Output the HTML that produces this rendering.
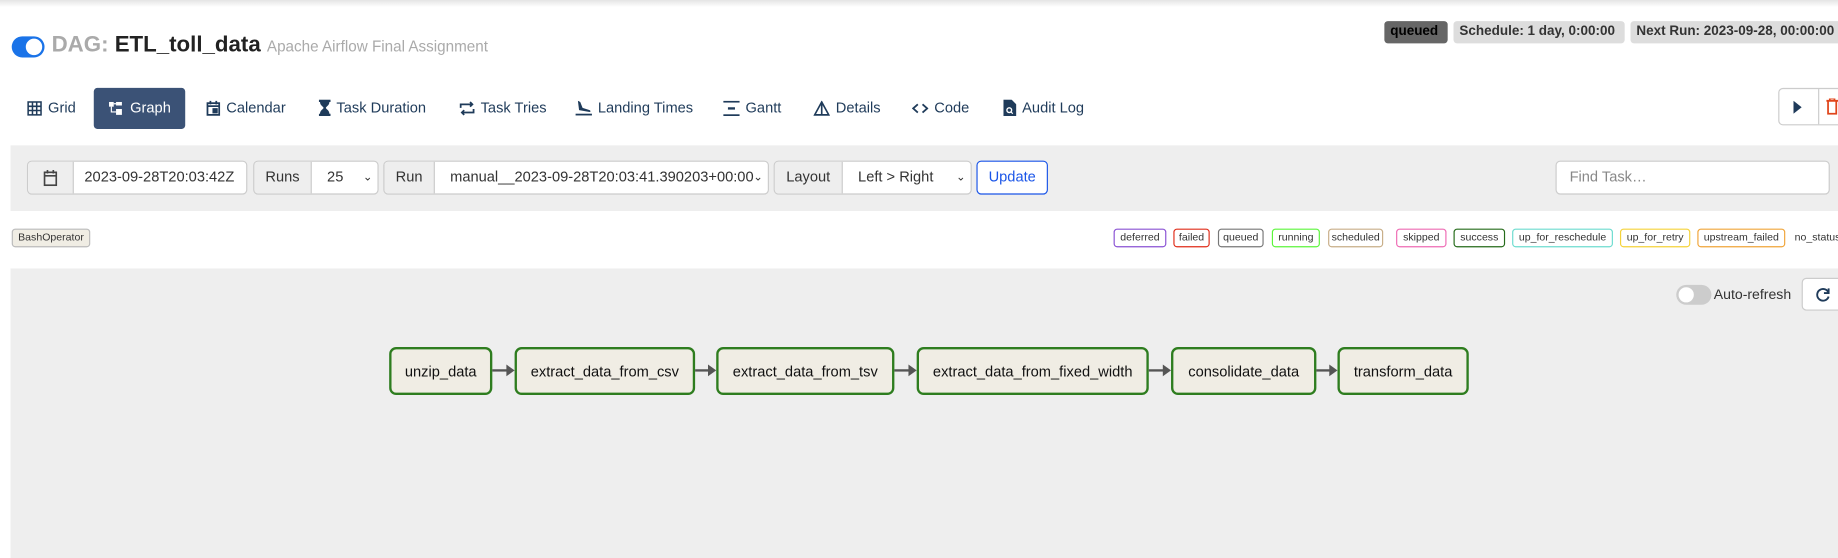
<!DOCTYPE html>
<html><head><meta charset="utf-8"><style>
html,body{margin:0;padding:0;width:1838px;height:557px;overflow:hidden;background:#fff;font-family:"Liberation Sans",Arial,sans-serif;}
#w{position:absolute;left:0;top:0;width:1568px;height:476px;transform:scale(1.1722);transform-origin:0 0;}
.a{position:absolute;}
.shadow{left:0;top:0;width:1568px;height:6px;background:linear-gradient(#e4e4e4,#fff);}
.badge{position:absolute;top:18px;height:19px;line-height:19px;font-size:11.5px;font-weight:bold;padding:0 5px;border-radius:3px;background:#ddd;color:#333;white-space:nowrap;overflow:hidden}
.nav{position:absolute;top:75px;height:35px;line-height:35px;font-size:12.5px;color:#1f3b5a;white-space:nowrap;}
.nav svg{vertical-align:-3px;margin-right:5px}
.panel{background:#eee;}
.grp{position:absolute;top:137px;height:29px;border:1px solid #ccc;border-radius:4px;background:#fff;font-size:12.5px;color:#333;line-height:27px;box-sizing:border-box;overflow:hidden;white-space:nowrap}
.lbl{position:absolute;top:0;bottom:0;left:0;background:#eee;border-right:1px solid #ccc;text-align:center;}
.leg{position:absolute;top:195px;height:16px;line-height:13px;font-size:9px;border:1.5px solid;border-radius:3px;box-sizing:border-box;padding:0;text-align:center;color:#333;background:#fff;white-space:nowrap;overflow:hidden}
.node{position:absolute;top:296px;height:41px;line-height:38px;border:2px solid #2e7d1f;border-radius:6px;background:#f0ede4;box-sizing:border-box;text-align:center;font-size:12.5px;color:#111;}
.arr{position:absolute;top:315px;height:2px;background:#555;}
.arr:after{content:"";position:absolute;right:-2px;top:-4px;border-left:7px solid #555;border-top:5px solid transparent;border-bottom:5px solid transparent;}
</style></head><body><div id="w">
<div class="a shadow"></div>
<div class="a" style="left:10px;top:31px;width:28px;height:18px;border-radius:9px;background:#1a73e8"><div style="position:absolute;right:2px;top:2px;width:14px;height:14px;border-radius:7px;background:#fff"></div></div>
<div class="a" style="left:44px;top:28px;font-size:19px;font-weight:bold;white-space:nowrap"><span style="color:#aaa">DAG:</span> <span style="color:#222">ETL_toll_data</span> <span style="font-size:13px;font-weight:normal;color:#aaa">Apache Airflow Final Assignment</span></div>
<div class="badge" style="left:1181px;width:44px;background:#666;color:#000">queued</div>
<div class="badge" style="left:1240px;width:136px">Schedule: 1 day, 0:00:00</div>
<div class="badge" style="left:1391px;width:172px;border-radius:3px 0 0 3px">Next Run: 2023-09-28, 00:00:00</div>

<div class="a" style="left:80px;top:75px;width:78px;height:35px;background:#3b5276;border-radius:3px"></div>
<div class="nav" style="left:23px"><svg width="13" height="13" viewBox="0 0 13 13" fill="none" stroke="#1f3b5a" stroke-width="1.3"><rect x="1" y="1" width="11" height="11"/><path d="M1 4.7H12M1 8.3H12M4.7 1V12M8.3 1V12"/></svg>Grid</div>
<div class="nav" style="left:93px;color:#fff"><svg width="13" height="13" viewBox="0 0 13 13" fill="#fff"><rect x="0" y="1" width="4" height="4"/><rect x="6" y="1" width="5" height="3"/><rect x="6" y="7" width="5" height="5"/><path d="M4 2.5H6M2 5V9.5H6" stroke="#fff" fill="none"/></svg>Graph</div>
<div class="nav" style="left:176px"><svg width="12" height="13" viewBox="0 0 12 13" fill="none" stroke="#1f3b5a" stroke-width="1.5"><rect x="1" y="2" width="10" height="10"/><path d="M1 4.5H11M3.5 0V3M8.5 0V3"/><rect x="6" y="7" width="3" height="3" fill="#1f3b5a"/></svg>Calendar</div>
<div class="nav" style="left:272px"><svg width="10" height="14" viewBox="0 0 10 14" fill="#1f3b5a"><path d="M0 0H10V2H9C9 5 6 6 6 7C6 8 9 9 9 12H10V14H0V12H1C1 9 4 8 4 7C4 6 1 5 1 2H0Z"/></svg>Task Duration</div>
<div class="nav" style="left:392px"><svg width="13" height="13" viewBox="0 0 13 13" fill="none" stroke="#1f3b5a" stroke-width="1.5"><path d="M1 6V3H11M9 1L11 3L9 5M12 7V10H2M4 8L2 10L4 12"/></svg>Task Tries</div>
<div class="nav" style="left:491px"><svg width="14" height="13" viewBox="0 0 14 13" fill="#1f3b5a"><path d="M2 0L4 1L6 6L12 8C13 8.5 13 9.5 12 9.5L3 8Z"/><rect x="0" y="11" width="14" height="1.5"/></svg>Landing Times</div>
<div class="nav" style="left:617px"><svg width="14" height="13" viewBox="0 0 14 13" fill="#1f3b5a"><rect x="0" y="0" width="14" height="1.5"/><rect x="4" y="5.5" width="6" height="2"/><rect x="0" y="11.5" width="14" height="1.5"/></svg>Gantt</div>
<div class="nav" style="left:694px"><svg width="14" height="13" viewBox="0 0 14 13" fill="none" stroke="#1f3b5a" stroke-width="1.4"><path d="M7 1L13 12H1Z M7 1V12"/></svg>Details</div>
<div class="nav" style="left:778px"><svg width="14" height="13" viewBox="0 0 14 13" fill="none" stroke="#1f3b5a" stroke-width="1.5"><path d="M5 3L1 6.5L5 10M9 3L13 6.5L9 10"/></svg>Code</div>
<div class="nav" style="left:856px"><svg width="11" height="14" viewBox="0 0 11 14" fill="#1f3b5a"><path d="M0 0H7L11 4V14H0Z"/><circle cx="5" cy="9" r="2" fill="none" stroke="#fff" stroke-width="1.2"/><path d="M6.5 10.5L8 12" stroke="#fff"/></svg>Audit Log</div>
<div class="a" style="left:1517px;top:75px;width:60px;height:32px;border:1px solid #ccc;border-radius:4px;box-sizing:border-box;background:#fff"><div style="position:absolute;left:33px;top:0;bottom:0;border-left:1px solid #ccc"></div><svg class="a" style="left:12px;top:10px" width="8" height="11"><path d="M0 0L7 5.5L0 11Z" fill="#1f3b5a"/></svg><svg class="a" style="left:40px;top:8px" width="10" height="14" fill="none" stroke="#e0451b" stroke-width="1.5"><path d="M0 2H10M3 2V0H7V2M1.5 2V13H8.5V2"/></svg></div>

<div class="a panel" style="left:9px;top:124px;width:1559px;height:56px"></div>
<div class="grp" style="left:23px;width:188px"><div class="lbl" style="width:38px"><svg style="margin-top:7px" width="12" height="14" fill="none" stroke="#444" stroke-width="1.4"><rect x="1" y="2" width="10" height="11"/><path d="M1 5H11M3.5 0V3M8.5 0V3"/></svg></div><span style="position:absolute;left:48px">2023-09-28T20:03:42Z</span></div>
<div class="grp" style="left:216px;width:107px"><div class="lbl" style="width:48px">Runs</div><span style="position:absolute;left:62px">25</span><span style="position:absolute;right:4px;font-size:10px">&#8964;</span></div>
<div class="grp" style="left:327px;width:329px"><div class="lbl" style="width:42px">Run</div><span style="position:absolute;left:56px">manual__2023-09-28T20:03:41.390203+00:00</span><span style="position:absolute;right:4px;font-size:10px">&#8964;</span></div>
<div class="grp" style="left:660px;width:169px"><div class="lbl" style="width:57px">Layout</div><span style="position:absolute;left:71px">Left &gt; Right</span><span style="position:absolute;right:4px;font-size:10px">&#8964;</span></div>
<div class="grp" style="left:833px;width:61px;border-color:#1a55e8;color:#1a55e8;text-align:center">Update</div>
<div class="grp" style="left:1327px;width:234px;color:#888;padding-left:11px">Find Task…</div>

<div class="leg" style="left:10px;width:67px;background:#f0ede4;border-color:#bbb;border-width:1px">BashOperator</div>
<div class="leg" style="left:950px;width:45px;border-color:#8a52d4">deferred</div>
<div class="leg" style="left:1001px;width:31px;border-color:#e02d1a">failed</div>
<div class="leg" style="left:1039px;width:39px;border-color:#777">queued</div>
<div class="leg" style="left:1085px;width:41px;border-color:#5cf53c">running</div>
<div class="leg" style="left:1133px;width:47px;border-color:#c8ae88">scheduled</div>
<div class="leg" style="left:1191px;width:43px;border-color:#ee6bb4">skipped</div>
<div class="leg" style="left:1240px;width:44px;border-color:#256b1a">success</div>
<div class="leg" style="left:1290px;width:86px;border-color:#6ddccf">up_for_reschedule</div>
<div class="leg" style="left:1382px;width:60px;border-color:#f5d33a">up_for_retry</div>
<div class="leg" style="left:1448px;width:75px;border-color:#f0a53a">upstream_failed</div>
<div class="a" style="left:1531px;top:197px;font-size:9px;color:#333;white-space:nowrap">no_status</div>

<div class="a panel" style="left:9px;top:229px;width:1559px;height:247px"></div>
<div class="a" style="left:1430px;top:243px;width:30px;height:17px;border-radius:9px;background:#ccc"><div style="position:absolute;left:2px;top:2px;width:13px;height:13px;border-radius:7px;background:#fff"></div></div>
<div class="a" style="left:1462px;top:244px;font-size:12px;color:#333">Auto-refresh</div>
<div class="a" style="left:1537px;top:237px;width:36px;height:28px;background:#fff;border:1px solid #ccc;border-radius:4px;box-sizing:border-box"><svg class="a" style="left:11px;top:7px" width="13" height="13" fill="none" stroke="#1f3b5a" stroke-width="1.6"><path d="M11 5A5 5 0 1 0 11 8M11 1V5H7"/></svg></div>

<div class="node" style="left:332px;width:88px">unzip_data</div>
<div class="arr" style="left:420px;width:17px"></div>
<div class="node" style="left:439px;width:154px">extract_data_from_csv</div>
<div class="arr" style="left:593px;width:16px"></div>
<div class="node" style="left:611px;width:152px">extract_data_from_tsv</div>
<div class="arr" style="left:763px;width:17px"></div>
<div class="node" style="left:782px;width:198px">extract_data_from_fixed_width</div>
<div class="arr" style="left:980px;width:17px"></div>
<div class="node" style="left:999px;width:124px">consolidate_data</div>
<div class="arr" style="left:1123px;width:16px"></div>
<div class="node" style="left:1141px;width:112px">transform_data</div>
</div></body></html>
